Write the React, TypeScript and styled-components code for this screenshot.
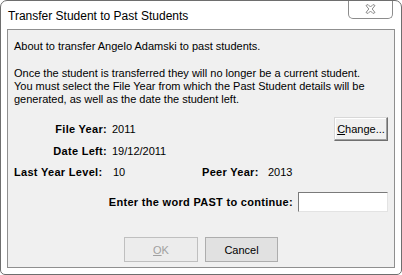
import React from "react";
import styled, { createGlobalStyle } from "styled-components";

const Global = createGlobalStyle`
  html, body { margin: 0; padding: 0; background: #ffffff; }
  #root { width: 402px; height: 275px; }
`;

const Window = styled.div`
  box-sizing: border-box;
  width: 402px;
  height: 275px;
  border: 1px solid #6e6e6e;
  border-radius: 7px 7px 5px 5px;
  background: #ffffff;
  display: flex;
  flex-direction: column;
  overflow: hidden;
`;

const TitleBar = styled.div`
  height: 28px;
  display: flex;
  align-items: flex-start;
  justify-content: space-between;
  padding: 0 8px 0 7px;
  flex-shrink: 0;
`;

const Title = styled.div`
  font-family: "Liberation Sans", Arial, sans-serif;
  font-size: 12px;
  color: #000000;
  margin-top: 8px;
`;

const CloseButton = styled.div`
  box-sizing: border-box;
  width: 45px;
  height: 19px;
  margin-top: -1px;
  border: 1px solid #8c8c8c;
  border-top: none;
  border-radius: 0 0 5px 5px;
  background: #ffffff;
  display: flex;
  align-items: center;
  justify-content: center;
`;

const Client = styled.div`
  flex: 1;
  margin: 0 6px 6px 6px;
  border: 1px solid #8f8f8f;
  background: #f0f0f0;
  padding: 10px 6px 0 6px;
  font-family: "Liberation Sans", Arial, sans-serif;
  font-size: 11px;
  line-height: 13px;
  color: #000000;
  display: flex;
  flex-direction: column;
`;

const Para = styled.p<{ $top?: number }>`
  margin: ${(p) => p.$top ?? 0}px 0 0 0;
`;

const FieldRow = styled.div<{ $h: number; $top?: number }>`
  display: flex;
  align-items: center;
  height: ${(p) => p.$h}px;
  margin-top: ${(p) => p.$top ?? 0}px;
`;

const Label = styled.span<{ $w?: number; $align?: "left" | "right" }>`
  font-weight: bold;
  letter-spacing: 0.3px;
  width: ${(p) => (p.$w ? `${p.$w}px` : "auto")};
  text-align: ${(p) => p.$align ?? "right"};
  box-sizing: border-box;
  flex-shrink: 0;
  white-space: nowrap;
`;

const Value = styled.span<{ $w?: number }>`
  padding-left: 5px;
  width: ${(p) => (p.$w ? `${p.$w}px` : "auto")};
  flex-shrink: 0;
  box-sizing: border-box;
`;

const Spacer = styled.div`
  flex: 1;
`;

const Button = styled.button<{ $w: number; $h: number }>`
  box-sizing: border-box;
  width: ${(p) => p.$w}px;
  height: ${(p) => p.$h}px;
  padding: 0;
  border: 1px solid #adadad;
  background: #e1e1e1;
  font-family: "Liberation Sans", Arial, sans-serif;
  font-size: 11px;
  color: #000000;
  &:disabled {
    border-color: #bfbfbf;
    background: #ececec;
    color: #a0a0a0;
  }
`;

const ChangeButton = styled(Button)`
  border-color: #d8d8d8 #6f6f6f #6f6f6f #d8d8d8;
  background: #f0f0f0;
  box-shadow: inset -1px -1px 0 #a0a0a0, inset 1px 1px 0 #ffffff;
`;

const EnterRow = styled.div`
  display: flex;
  align-items: center;
  justify-content: flex-end;
  gap: 5px;
  height: 20px;
  margin-top: 9px;
`;

const TextInput = styled.input`
  box-sizing: border-box;
  width: 90px;
  height: 20px;
  border: 1px solid;
  border-color: #7a7a7a #e3e3e3 #e3e3e3 #7a7a7a;
  background: #ffffff;
  outline: none;
  padding: 0 2px;
  font-family: "Liberation Sans", Arial, sans-serif;
  font-size: 11px;
`;

const ButtonBar = styled.div`
  display: flex;
  justify-content: center;
  gap: 7px;
  margin-top: 25px;
`;

export default function App() {
  return (
    <>
      <Global />
      <Window>
        <TitleBar>
          <Title>Transfer Student to Past Students</Title>
          <CloseButton>
            <svg width="11" height="10" viewBox="0 0 11 10">
              <path
                d="M1 1.5 L3 0.5 L5.5 3 L8 0.5 L10 1.5 L7.2 5 L10 8.5 L8 9.5 L5.5 7 L3 9.5 L1 8.5 L3.8 5 Z"
                fill="#ffffff"
                stroke="#8a8a8a"
                strokeWidth="1"
                strokeLinejoin="round"
              />
            </svg>
          </CloseButton>
        </TitleBar>
        <Client>
          <Para>About to transfer Angelo Adamski to past students.</Para>
          <Para $top={14}>
            Once the student is transferred they will no longer be a current student.
            <br />
            You must select the File Year from which the Past Student details will be
            <br />
            generated, as well as the date the student left.
          </Para>
          <FieldRow $h={24} $top={11}>
            <Label $w={93}>File Year:</Label>
            <Value>2011</Value>
            <Spacer />
            <ChangeButton $w={54} $h={24}>
              <u>C</u>hange...
            </ChangeButton>
          </FieldRow>
          <FieldRow $h={20}>
            <Label $w={93}>Date Left:</Label>
            <Value>19/12/2011</Value>
          </FieldRow>
          <FieldRow $h={22}>
            <Label $w={94} $align="left">Last Year Level:</Label>
            <Value $w={94}>10</Value>
            <Label $w={61} $align="left">Peer Year:</Label>
            <Value>2013</Value>
          </FieldRow>
          <EnterRow>
            <Label>Enter the word PAST to continue:</Label>
            <TextInput />
          </EnterRow>
          <ButtonBar>
            <Button $w={74} $h={25} disabled>
              <u>O</u>K
            </Button>
            <Button $w={73} $h={25}>Cancel</Button>
          </ButtonBar>
        </Client>
      </Window>
    </>
  );
}
